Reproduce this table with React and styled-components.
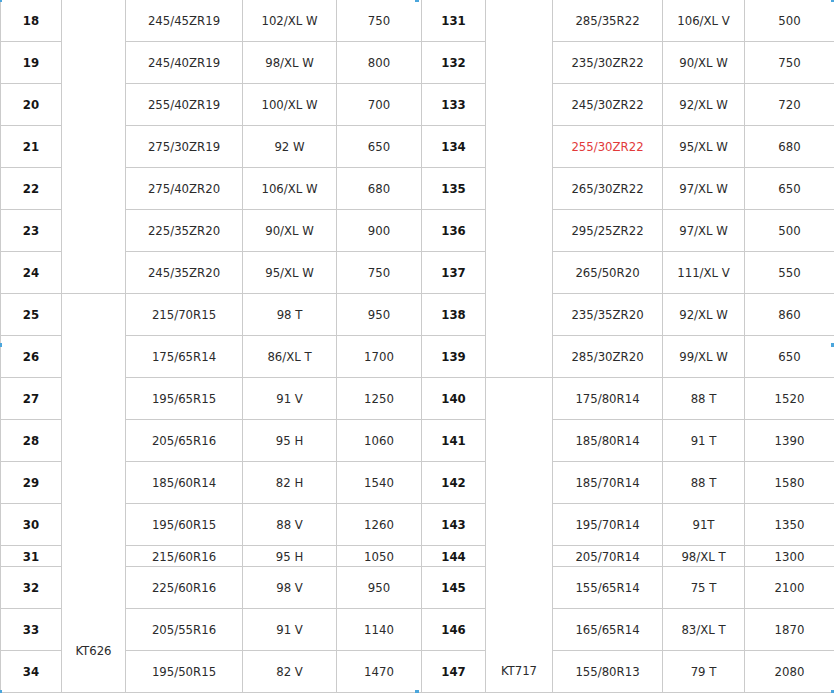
import React from "react";
import styled, { createGlobalStyle } from "styled-components";

const Global = createGlobalStyle`
  html, body { margin: 0; padding: 0; background: #fff; overflow: hidden; }
`;

const Frame = styled.div`
  position: relative;
  width: 834px;
  height: 693px;
  overflow: hidden;
  background: #fff;
`;

const Table = styled.table`
  width: 834px;
  margin-top: -1px;
  border-collapse: collapse;
  table-layout: fixed;
  font-family: "DejaVu Sans Condensed", "DejaVu Sans", sans-serif;
  font-stretch: condensed;
  font-size: 13px;
  color: #2b2b2b;
`;

const Cell = styled.td`
  border: 1px solid #cbcbcb;
  height: ${(p) => (p.$short ? 20 : 41)}px;
  padding: 0;
  text-align: center;
  vertical-align: middle;
  white-space: nowrap;
  color: ${(p) => (p.$red ? "#e23a3a" : "inherit")};
`;

const NumCell = styled(Cell)`
  font-weight: bold;
  color: #151515;
`;

const ModelCell = styled.td`
  border: 1px solid #cbcbcb;
  padding: 0 0 ${(p) => p.$pad || 0}px;
  text-align: center;
  vertical-align: bottom;
  color: #2b2b2b;
`;

const Handle = styled.span`
  position: absolute;
  width: 4px;
  height: 4px;
  background: #4ba6dc;
  left: ${(p) => p.$x - 2}px;
  top: ${(p) => p.$y - 2}px;
`;

const left = [
  ["18", "245/45ZR19", "102/XL W", "750"],
  ["19", "245/40ZR19", "98/XL W", "800"],
  ["20", "255/40ZR19", "100/XL W", "700"],
  ["21", "275/30ZR19", "92 W", "650"],
  ["22", "275/40ZR20", "106/XL W", "680"],
  ["23", "225/35ZR20", "90/XL W", "900"],
  ["24", "245/35ZR20", "95/XL W", "750"],
  ["25", "215/70R15", "98 T", "950"],
  ["26", "175/65R14", "86/XL T", "1700"],
  ["27", "195/65R15", "91 V", "1250"],
  ["28", "205/65R16", "95 H", "1060"],
  ["29", "185/60R14", "82 H", "1540"],
  ["30", "195/60R15", "88 V", "1260"],
  ["31", "215/60R16", "95 H", "1050"],
  ["32", "225/60R16", "98 V", "950"],
  ["33", "205/55R16", "91 V", "1140"],
  ["34", "195/50R15", "82 V", "1470"],
];

const right = [
  ["131", "285/35R22", "106/XL V", "500"],
  ["132", "235/30ZR22", "90/XL W", "750"],
  ["133", "245/30ZR22", "92/XL W", "720"],
  ["134", "255/30ZR22", "95/XL W", "680", true],
  ["135", "265/30ZR22", "97/XL W", "650"],
  ["136", "295/25ZR22", "97/XL W", "500"],
  ["137", "265/50R20", "111/XL V", "550"],
  ["138", "235/35ZR20", "92/XL W", "860"],
  ["139", "285/30ZR20", "99/XL W", "650"],
  ["140", "175/80R14", "88 T", "1520"],
  ["141", "185/80R14", "91 T", "1390"],
  ["142", "185/70R14", "88 T", "1580"],
  ["143", "195/70R14", "91T", "1350"],
  ["144", "205/70R14", "98/XL T", "1300"],
  ["145", "155/65R14", "75 T", "2100"],
  ["146", "165/65R14", "83/XL T", "1870"],
  ["147", "155/80R13", "79 T", "2080"],
];

const widths = [61, 64, 117, 94, 85, 64, 67, 110, 82, 90];

const handles = [
  [0, 0], [417, 0], [833, 0],
  [0, 345], [833, 345],
  [0, 692], [417, 692], [833, 692],
];

function leftModel(i) {
  if (i === 0) return <ModelCell rowSpan={7} />;
  if (i === 7) return <ModelCell rowSpan={10} $pad={34}>KT626</ModelCell>;
  return null;
}

function rightModel(i) {
  if (i === 0) return <ModelCell rowSpan={9} />;
  if (i === 9) return <ModelCell rowSpan={8} $pad={14}>KT717</ModelCell>;
  return null;
}

export default function App() {
  return (
    <Frame>
      <Global />
      <Table>
        <colgroup>
          {widths.map((w, i) => (
            <col key={i} style={{ width: w }} />
          ))}
        </colgroup>
        <tbody>
          {left.map((l, i) => {
            const r = right[i];
            const short = i === 13;
            return (
              <tr key={l[0]}>
                <NumCell $short={short}>{l[0]}</NumCell>
                {leftModel(i)}
                <Cell $short={short}>{l[1]}</Cell>
                <Cell $short={short}>{l[2]}</Cell>
                <Cell $short={short}>{l[3]}</Cell>
                <NumCell $short={short}>{r[0]}</NumCell>
                {rightModel(i)}
                <Cell $short={short} $red={r[4]}>{r[1]}</Cell>
                <Cell $short={short}>{r[2]}</Cell>
                <Cell $short={short}>{r[3]}</Cell>
              </tr>
            );
          })}
        </tbody>
      </Table>
      {handles.map(([x, y], i) => (
        <Handle key={i} $x={x} $y={y} />
      ))}
    </Frame>
  );
}
